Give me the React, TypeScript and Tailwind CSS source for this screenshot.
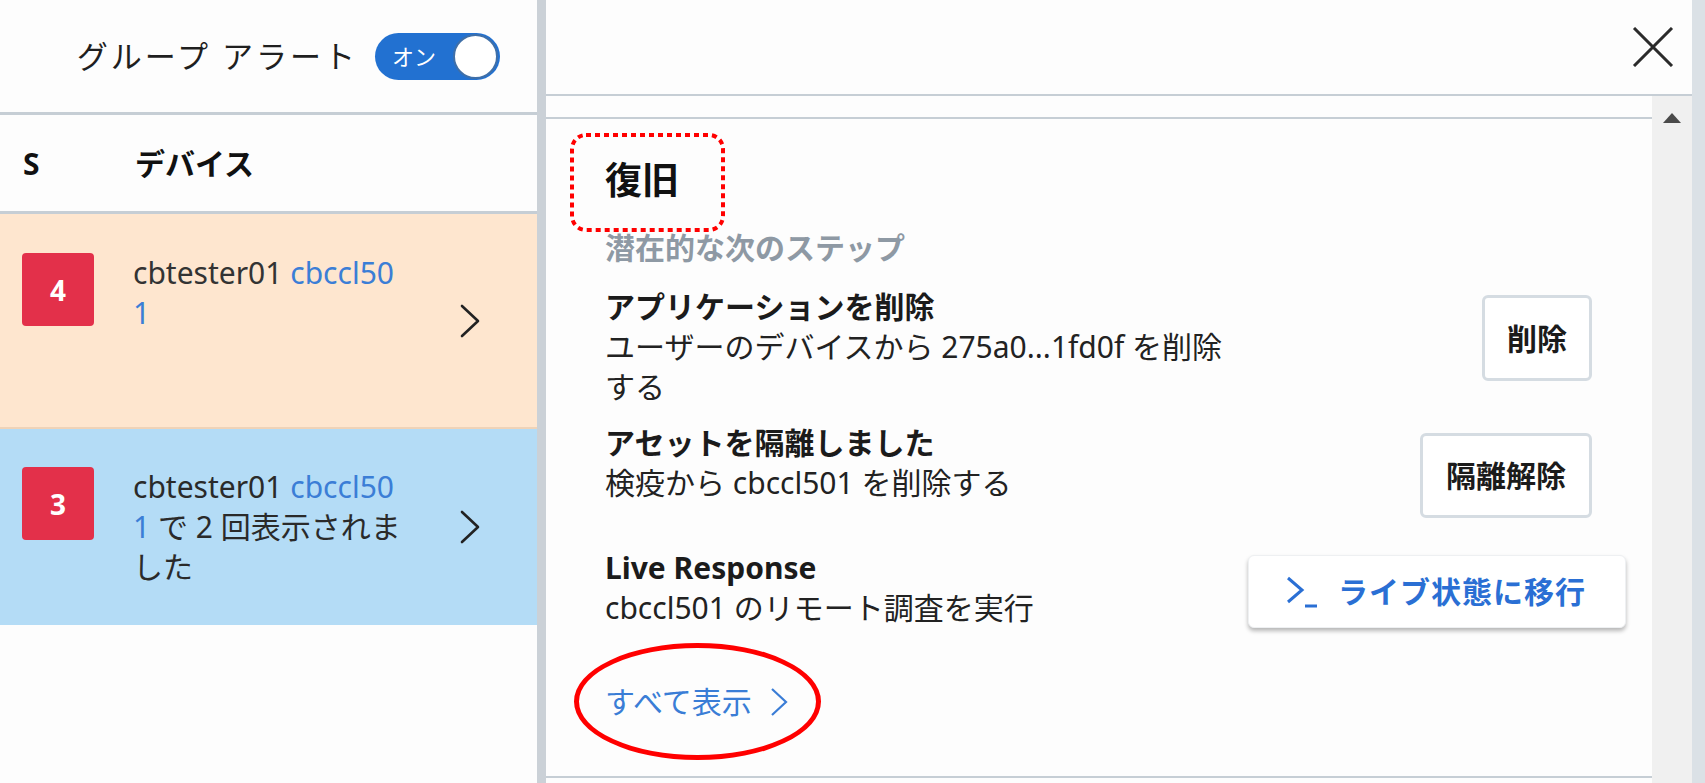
import React from 'react';

const Chevron = ({ className = '' }: { className?: string }) => (
  <svg width="20" height="34" viewBox="0 0 20 34" className={className} fill="none">
    <path d="M2 2 L18 17 L2 32" stroke="currentColor" strokeWidth="2.6" strokeLinecap="round" strokeLinejoin="round" />
  </svg>
);

function Badge({ n }: { n: number }) {
  return (
    <div className="w-[72px] h-[73px] shrink-0 rounded-[4px] bg-[#e3304a] flex items-center justify-center text-white text-[28px] font-bold">
      {n}
    </div>
  );
}

function StepRow({
  title,
  lines,
  children,
  className = '',
}: {
  title: string;
  lines: string[];
  children: React.ReactNode;
  className?: string;
}) {
  return (
    <div className={`flex items-start justify-between ${className}`}>
      <div className="leading-[40px]">
        <div className="font-bold text-[#1b1b1b]">{title}</div>
        {lines.map((l) => (
          <div key={l} className="text-[#222]">{l}</div>
        ))}
      </div>
      {children}
    </div>
  );
}

export default function App() {
  return (
    <div className="flex h-[783px] w-[1705px] overflow-hidden bg-[#fdfdfd] text-[30px] text-[#222] font-['Noto_Sans','Noto_Sans_CJK_JP',sans-serif]">
      {/* left list */}
      <div className="w-[537px] shrink-0 flex flex-col">
        <div className="h-[112px] flex items-center justify-end pr-[37px]">
          <span className="mr-[17px] text-[31px] tracking-[3px] text-[#1f1f1f]">グループ アラート</span>
          <div className="relative w-[125px] h-[47px] rounded-full bg-[#2271d1] flex items-center">
            <span className="ml-[17px] text-[22px] text-white leading-none">オン</span>
            <div className="absolute right-[2px] top-[1px] w-[45px] h-[45px] rounded-full bg-white border-2 border-[#3f6fa8]" />
          </div>
        </div>
        <div className="h-[3px] bg-[#c6ced5]" />
        <div className="h-[96px] flex items-center font-bold text-[#111]">
          <span className="ml-[23px] w-[112px]">S</span>
          <span>デバイス</span>
        </div>
        <div className="h-[3px] bg-[#c6ced5]" />

        <div className="h-[215px] flex bg-[#fee6cf] border-b-2 border-[#efd3b8]">
          <div className="flex-1 flex items-start pt-[39px] pl-[22px]">
            <Badge n={4} />
            <div className="ml-[39px] leading-[40px]">
              <div>
                <span className="text-[#333]">cbtester01</span> <span className="text-[#3b7ed6]">cbccl50</span>
              </div>
              <div className="text-[#3b7ed6]">1</div>
            </div>
          </div>
          <div className="self-center mr-[57px] text-[#222]">
            <Chevron />
          </div>
        </div>

        <div className="h-[196px] flex bg-[#b4dcf6]">
          <div className="flex-1 flex items-start pt-[38px] pl-[22px]">
            <Badge n={3} />
            <div className="ml-[39px] leading-[40px] text-[#2a2a2a]">
              <div>
                <span>cbtester01</span> <span className="text-[#3b7ed6]">cbccl50</span>
              </div>
              <div>
                <span className="text-[#3b7ed6]">1</span> で 2 回表示されま
              </div>
              <div>した</div>
            </div>
          </div>
          <div className="self-center mr-[57px] text-[#222]">
            <Chevron />
          </div>
        </div>
      </div>

      {/* divider */}
      <div className="w-[9px] shrink-0 bg-[#cbd1d7]" />

      {/* right panel */}
      <div className="flex-1 flex">
        <div className="flex-1 flex flex-col">
          <div className="h-[94px] flex items-center justify-end pr-[18px]">
            <svg width="42" height="40" viewBox="0 0 42 40" fill="none">
              <path d="M2 1 L40 39 M40 1 L2 39" stroke="#2b2b2b" strokeWidth="3" />
            </svg>
          </div>
          <div className="h-[2px] bg-[#c6ced5]" />
          <div className="flex-1 flex">
            <div className="flex-1 flex flex-col">
              <div className="h-[21px]" />
              <div className="h-[2px] bg-[#c6ced5]" />
              <div className="relative flex-1 pl-[59px] pr-[26px]">
                {/* annotation: dotted box */}
                <svg className="absolute left-[24px] top-[14px]" width="155" height="99" viewBox="0 0 155 99" fill="none">
                  <rect x="2" y="2" width="151" height="95" rx="14" stroke="#ff0000" strokeWidth="4" strokeDasharray="5 4" />
                </svg>
                {/* annotation: ellipse */}
                <div className="absolute left-[28px] top-[524px] w-[247px] h-[117px] rounded-[50%] border-[5px] border-[#ff0000]" />

                <div className="mt-[37px] text-[37px] leading-[48px] font-bold text-[#111]">復旧</div>
                <div className="mt-[24px] leading-[40px] font-semibold text-[#8e99a4]">潜在的な次のステップ</div>

                <StepRow
                  className="mt-[19px]"
                  title="アプリケーションを削除"
                  lines={['ユーザーのデバイスから 275a0...1fd0f を削除', 'する']}
                >
                  <button className="mt-[8px] mr-[34px] w-[110px] h-[86px] rounded-[6px] border-[3px] border-[#d5dce2] bg-white font-bold text-[#1b1b1b]">
                    削除
                  </button>
                </StepRow>

                <StepRow
                  className="mt-[16px]"
                  title="アセットを隔離しました"
                  lines={['検疫から cbccl501 を削除する']}
                >
                  <button className="mt-[10px] mr-[34px] w-[172px] h-[85px] rounded-[6px] border-[3px] border-[#d5dce2] bg-white font-bold text-[#1b1b1b]">
                    隔離解除
                  </button>
                </StepRow>

                <StepRow
                  className="mt-[30px]"
                  title="Live Response"
                  lines={['cbccl501 のリモート調査を実行']}
                >
                  <button className="mt-[7px] w-[378px] h-[73px] rounded-[6px] bg-white border border-[#eef0f2] shadow-[0_3px_4px_rgba(0,0,0,0.28)] flex items-center pl-[37px] font-semibold text-[#2a6fd4]">
                    <svg width="32" height="34" viewBox="0 0 32 34" fill="none" className="mr-[20px]">
                      <path d="M2 3 L16 15 L2 27" stroke="#2a6fd4" strokeWidth="3" strokeLinejoin="miter" />
                      <path d="M19 31 H31" stroke="#2a6fd4" strokeWidth="3" />
                    </svg>
                    <span className="tracking-[1px]">ライブ状態に移行</span>
                  </button>
                </StepRow>

                <div className="mt-[54px] flex items-center leading-[40px] text-[#3a7dd6]">
                  すべて表示
                  <svg width="18" height="30" viewBox="0 0 18 30" fill="none" className="ml-[18px]">
                    <path d="M2 2 L16 15 L2 28" stroke="#3a7dd6" strokeWidth="2.2" />
                  </svg>
                </div>
              </div>
              <div className="h-[2px] bg-[#c6ced5]" />
              <div className="h-[5px]" />
            </div>
            {/* scrollbar */}
            <div className="w-[40px] shrink-0 bg-[#f0f0f0] flex justify-center pt-[17px]">
              <div className="w-0 h-0 border-l-[9px] border-r-[9px] border-b-[10px] border-l-transparent border-r-transparent border-b-[#4a4a4a]" />
            </div>
          </div>
        </div>
        <div className="w-[13px] shrink-0 bg-[#dbe1e6]" />
      </div>
    </div>
  );
}
